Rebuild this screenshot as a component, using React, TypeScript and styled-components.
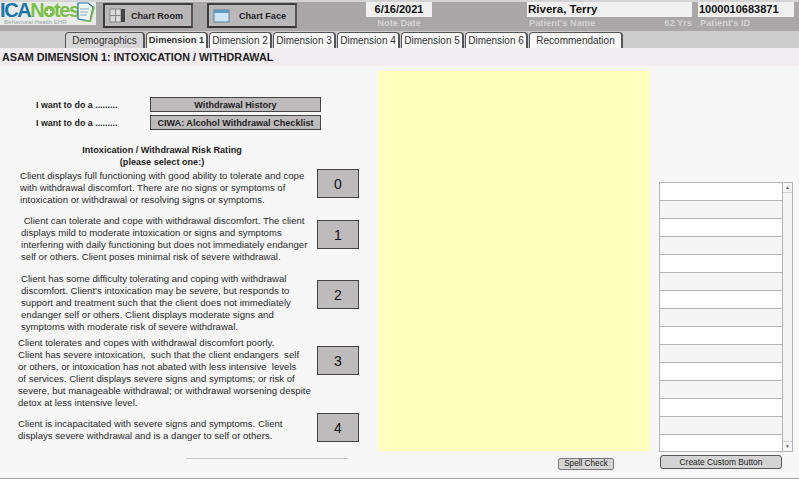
import React from "react";
import styled, { createGlobalStyle } from "styled-components";

const Global = createGlobalStyle`
  html, body { margin: 0; padding: 0; background: #f7f7f7; }
  body { font-family: "Liberation Sans", Arial, sans-serif; color: #222; }
  * { box-sizing: border-box; }
`;
const Page = styled.div`
  width: 799px; height: 479px; overflow: hidden; display: flex; flex-direction: column;
  background: #f7f7f7; border-bottom: 1px solid #a0a0a0;
`;
const Header = styled.header`
  height: 31px; flex: none; background: #a9a7a8; border-top: 2px solid #d4d4d4;
  display: flex; align-items: flex-start;
`;
const LogoBox = styled.div`
  width: 96px; height: 23px; background: #e9ebe8; position: relative; flex: none;
`;
const LogoWord = styled.div`
  font-size: 20px; line-height: 16px; height: 16px; font-weight: 700; letter-spacing: -1.4px; color: #1b75a6;
  white-space: nowrap;
`;
const Green = styled.span` color: #7cc04b; `;
const LogoSub = styled.div`
  padding-left: 4px; font-size: 6.1px; line-height: 7px; color: #8fa8a6; white-space: nowrap;
`;
const LogoPlus = styled.svg` position: absolute; left: 44px; top: 5px; `;
const LogoIcon = styled.svg` position: absolute; left: 76px; top: 0; `;
const ChartButton = styled.button<{ $ml: number; $gap: number }>`
  width: 90px; margin-left: ${p => p.$ml}px; height: 25px; margin-top: 1px; flex: none;
  background: #b9b7b8; border: 2px solid #3e3e3e; border-right-color: #555; border-bottom-color: #333;
  display: flex; align-items: center; padding: 0 0 0 4px; gap: ${p => p.$gap}px;
  font: 700 9.1px "Liberation Sans", Arial, sans-serif; color: #222; white-space: nowrap;
`;
const Field = styled.div<{ $w: number; $ml: number }>`
  width: ${p => p.$w}px; margin-left: ${p => p.$ml}px; flex: none; display: flex; flex-direction: column;
`;
const FieldValue = styled.div<{ $center?: boolean; $size?: number }>`
  height: 15px; background: #f0f0f0; font-size: ${p => p.$size ?? 11}px; line-height: 15px; font-weight: 700; color: #111;
  padding-left: ${p => (p.$center ? 0 : 1)}px; text-align: ${p => (p.$center ? "center" : "left")};
  white-space: nowrap;
`;
const FieldLabel = styled.div<{ $center?: boolean }>`
  font-size: 9.3px; line-height: 11px; margin-top: 1px; font-weight: 700; color: #d3d3d3;
  padding-left: ${p => (p.$center ? 0 : 2)}px;
  display: flex; justify-content: ${p => (p.$center ? "center" : "space-between")};
  white-space: nowrap;
`;
const TabBar = styled.nav`
  height: 17px; flex: none; background: #cccccc; display: flex; align-items: flex-end; padding-left: 65px;
  gap: 1px;
`;
const Tab = styled.div<{ $w: number; $active?: boolean; $dim?: boolean }>`
  width: ${p => p.$w}px; height: 16px; flex: none; text-align: center; white-space: nowrap;
  font-size: ${p => (p.$active ? 9.3 : 10)}px; line-height: 15px; color: #333; font-weight: ${p => (p.$active ? 700 : 400)};
  background: ${p => (p.$dim ? "#d6d6d6" : "#f7f7f7")};
  border: 1px solid #555; border-bottom: none; border-right-width: 2px; border-radius: 4px 4px 0 0;
`;
const TitleBar = styled.h1`
  height: 18px; flex: none; margin: 0; background: #f0ecf0; font-size: 10.8px; line-height: 18px; font-weight: 700;
  color: #222; padding-left: 2px; white-space: nowrap;
`;
const Body = styled.main`
  flex: 1; display: flex; min-height: 0; padding-top: 5px;
`;
const Left = styled.section`
  width: 378px; flex: none; padding-top: 26px;
`;
const WantRow = styled.div`
  display: flex; align-items: center; height: 15px; margin-bottom: 3px; padding-left: 36px;
`;
const WantLabel = styled.span`
  width: 114px; flex: none; font-size: 8.9px; font-weight: 700; color: #222; white-space: nowrap;
`;
const WantButton = styled.button`
  width: 171px; height: 15px; padding: 0; background: #bdbbbc; border: 1px solid #444;
  font: 700 9.1px "Liberation Sans", Arial, sans-serif; color: #222; white-space: nowrap;
`;
const Heading = styled.div`
  width: 324px; text-align: center; font-size: 9.1px; line-height: 12px; font-weight: 700; color: #222; margin-top: 14px;
`;
const Rating = styled.div<{ $mt: number; $h: number }>`
  display: grid; grid-template-columns: 317px 42px; align-items: start;
  height: ${p => p.$h}px; margin-top: ${p => p.$mt}px;
`;
const RatingText = styled.p<{ $tx: number }>`
  margin: 0; padding-left: ${p => p.$tx}px; font-size: 9.6px; line-height: 12px; color: #2a2a2a; white-space: pre;
`;
const ScoreButton = styled.button<{ $top: number }>`
  margin-top: ${p => p.$top}px; width: 42px; height: 29px; padding: 0;
  background: #bdbbbc; border: 1px solid #444;
  font: 400 14px "Liberation Sans", Arial, sans-serif; color: #111;
`;
const Rule = styled.hr`
  margin: 10px 0 0 186px; width: 162px; border: none; border-top: 1px solid #c9c9c9;
`;
const Middle = styled.section`
  width: 272px; flex: none; display: flex; flex-direction: column;
`;
const Note = styled.div`
  width: 272px; height: 380px; background: #ffffbe; flex: none;
`;
const SmallButton = styled.button`
  margin: 7px 0 0 180px; width: 56px; height: 12px; padding: 0; background: #d4d4d4; border: 1px solid #777; border-radius: 2px;
  font: 400 8.2px "Liberation Sans", Arial, sans-serif; color: #222; line-height: 10px; white-space: nowrap;
`;
const Right = styled.aside`
  width: 134px; margin-left: 9px; flex: none; padding-top: 111px; display: flex; flex-direction: column;
`;
const ListBox = styled.div`
  height: 270px; display: flex; border: 1px solid #b4b4b4; background: #fff; overflow: hidden;
`;
const Rows = styled.div`
  flex: 1; min-width: 0;
`;
const Row = styled.div<{ $odd: boolean }>`
  height: 18px; background: ${p => (p.$odd ? "#f5f5f5" : "#fff")}; border-bottom: 1px solid #b4b4b4;
`;
const Scroll = styled.div`
  width: 10px; flex: none; border-left: 1px solid #b4b4b4; background: #f4f4f4;
  display: flex; flex-direction: column; justify-content: space-between;
`;
const Arrow = styled.div`
  height: 10px; background: #f5f5f5; border-bottom: 1px solid #d0d0d0; color: #666; font-size: 5px; line-height: 9px; text-align: center;
`;
const ArrowDown = styled(Arrow)` border-bottom: none; border-top: 1px solid #d0d0d0; `;
const CustomButton = styled.button`
  margin: 3px 0 0 1px; width: 122px; height: 14px; padding: 0; background: #d4d4d4; border: 1px solid #555; border-radius: 3px;
  font: 400 8.4px "Liberation Sans", Arial, sans-serif; color: #222; white-space: nowrap;
`;

const tabs = [
  { t: "Demographics", w: 80, d: true },
  { t: "Dimension 1", w: 62, a: true },
  { t: "Dimension 2", w: 63 },
  { t: "Dimension 3", w: 63 },
  { t: "Dimension 4", w: 63 },
  { t: "Dimension 5", w: 63 },
  { t: "Dimension 6", w: 63 },
  { t: "Recommendation", w: 94 },
];

const ratings = [
  { mt: 2, h: 40, tx: 20, text: "Client displays full functioning with good ability to tolerate and cope\nwith withdrawal discomfort. There are no signs or symptoms of\nintoxication or withdrawal or resolving signs or symptoms.", top: -1 },
  { mt: 5, h: 48, tx: 21, text: " Client can tolerate and cope with withdrawal discomfort. The client\ndisplays mild to moderate intoxication or signs and symptoms\ninterfering with daily functioning but does not immediately endanger\nself or others. Client poses minimal risk of severe withdrawal.", top: 5 },
  { mt: 10, h: 60, tx: 21, text: "Client has some difficulty tolerating and coping with withdrawal\ndiscomfort. Client's intoxication may be severe, but responds to\nsupport and treatment such that the client does not immediately\nendanger self or others. Client displays moderate signs and\nsymptoms with moderate risk of severe withdrawal.", top: 7 },
  { mt: 4, h: 72, tx: 18, text: "Client tolerates and copes with withdrawal discomfort poorly.\nClient has severe intoxication,  such that the client endangers  self\nor others, or intoxication has not abated with less intensive  levels\nof services. Client displays severe signs and symptoms; or risk of\nsevere, but manageable withdrawal; or withdrawal worsening despite\ndetox at less intensive level.", top: 9 },
  { mt: 9, h: 30, tx: 18, text: "Client is incapacitated with severe signs and symptoms. Client\ndisplays severe withdrawal and is a danger to self or others.", top: -5 },
];

export default function App() {
  return (
    <Page>
      <Global />
      <Header>
        <LogoBox>
          <LogoWord>ICA<Green>Notes</Green></LogoWord>
          <LogoSub>Behavioral Health EHR</LogoSub>
          <LogoPlus width="10" height="10" viewBox="0 0 10 10">
            <circle cx="5" cy="5" r="5" fill="#7cc04b" />
            <path d="M5 2v6M2 5h6" stroke="#fff" strokeWidth="1.6" />
          </LogoPlus>
          <LogoIcon width="20" height="22" viewBox="0 0 20 22">
            <path d="M2 1h10l5 4-3 14-12-2z" fill="#f4f6f4" stroke="#1b75a6" strokeWidth="1.2" />
            <path d="M17 4l2 1-4 15-9-1 8-1z" fill="#7cc04b" />
            <path d="M4 7h9M4 10h8M4 13h7" stroke="#7fa9c0" strokeWidth="1" />
          </LogoIcon>
        </LogoBox>
        <ChartButton $ml={7} $gap={5}>
          <svg width="17" height="17" viewBox="0 0 17 17">
            <rect x="1" y="2" width="11" height="13" fill="#d9d9d9" stroke="#888" />
            <rect x="12" y="2" width="4" height="13" fill="#444" />
            <path d="M1 8.5h11M6.5 2v13" stroke="#888" />
          </svg>
          Chart Room
        </ChartButton>
        <ChartButton $ml={14} $gap={9}>
          <svg width="17" height="17" viewBox="0 0 17 17">
            <rect x="1" y="3" width="15" height="12" fill="#cfe6f7" stroke="#5d7f96" />
            <rect x="1" y="3" width="15" height="3" fill="#5f9ac4" />
          </svg>
          Chart Face
        </ChartButton>
        <Field $w={66} $ml={69}>
          <FieldValue $center>6/16/2021</FieldValue>
          <FieldLabel $center>Note Date</FieldLabel>
        </Field>
        <Field $w={165} $ml={95}>
          <FieldValue $size={11.5}>Rivera, Terry</FieldValue>
          <FieldLabel>Patient's Name<span>62 Yrs</span></FieldLabel>
        </Field>
        <Field $w={96} $ml={6}>
          <FieldValue $size={11}>1000010683871</FieldValue>
          <FieldLabel>Patient's ID</FieldLabel>
        </Field>
      </Header>
      <TabBar>
        {tabs.map(t => (
          <Tab key={t.t} $w={t.w} $active={t.a} $dim={t.d}>{t.t}</Tab>
        ))}
      </TabBar>
      <TitleBar>ASAM DIMENSION 1: INTOXICATION / WITHDRAWAL</TitleBar>
      <Body>
        <Left>
          <WantRow>
            <WantLabel>I want to do a .........</WantLabel>
            <WantButton>Withdrawal History</WantButton>
          </WantRow>
          <WantRow>
            <WantLabel>I want to do a .........</WantLabel>
            <WantButton>CIWA: Alcohol Withdrawal Checklist</WantButton>
          </WantRow>
          <Heading>Intoxication / Withdrawal Risk Rating<br />(please select one:)</Heading>
          {ratings.map((r, i) => (
            <Rating key={i} $mt={r.mt} $h={r.h}>
              <RatingText $tx={r.tx}>{r.text}</RatingText>
              <ScoreButton $top={r.top}>{i}</ScoreButton>
            </Rating>
          ))}
          <Rule />
        </Left>
        <Middle>
          <Note />
          <SmallButton>Spell Check</SmallButton>
        </Middle>
        <Right>
          <ListBox>
            <Rows>
              {Array.from({ length: 15 }, (_, i) => (
                <Row key={i} $odd={i % 2 === 1} />
              ))}
            </Rows>
            <Scroll>
              <Arrow>▲</Arrow>
              <ArrowDown>▼</ArrowDown>
            </Scroll>
          </ListBox>
          <CustomButton>Create Custom Button</CustomButton>
        </Right>
      </Body>
    </Page>
  );
}
